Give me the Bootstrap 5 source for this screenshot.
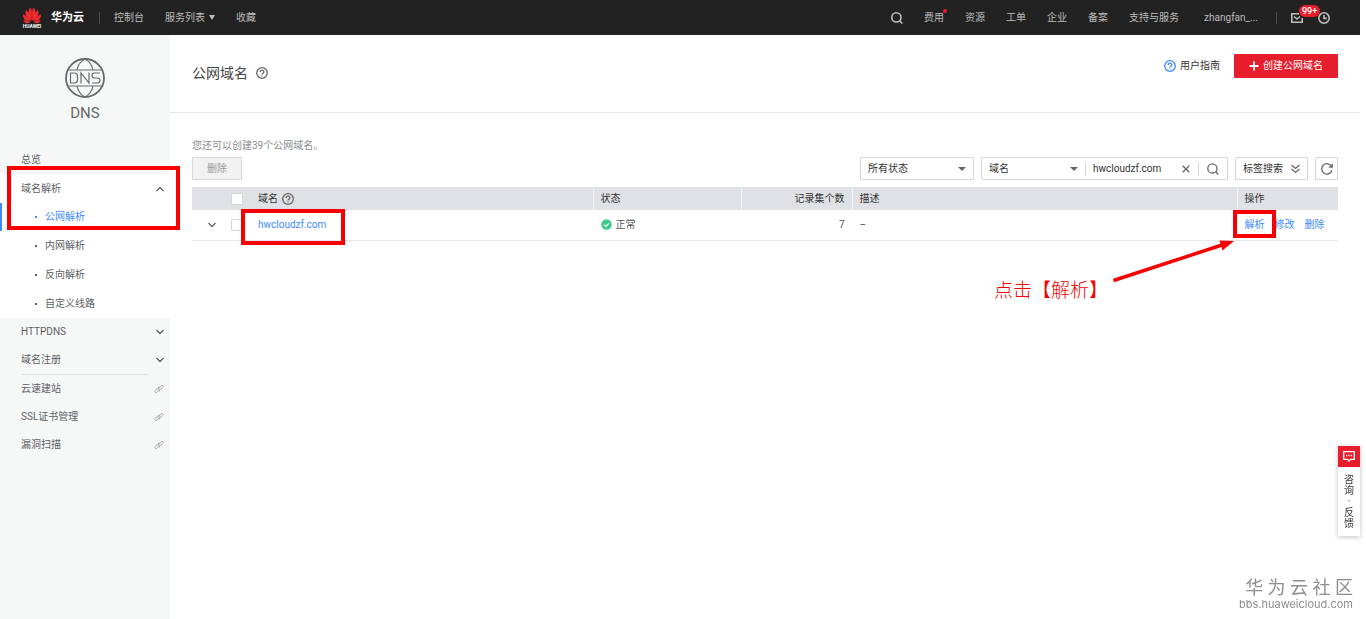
<!DOCTYPE html>
<html lang="zh-CN">
<head>
<meta charset="utf-8">
<meta name="viewport" content="width=device-width, initial-scale=1">
<title>公网域名</title>
<link href="https://cdn.jsdelivr.net/npm/bootstrap@5.3.0/dist/css/bootstrap.min.css" rel="stylesheet">
<style>
:root{--ink:#333;--soft:#5c6063;--blue:#3d8bff;--brand:#e71d2c;--mark-red:#f80000;--line:#d5d7d9}
body{font-family:Roboto,"Noto Sans CJK SC",sans-serif;font-size:10px;line-height:16px;color:var(--ink);background:#fff;padding-right:6px;min-height:100vh}
a{text-decoration:none;color:inherit}
svg{display:block;flex:none}
.ico{fill:none;stroke:currentColor;stroke-width:1.3}
.ico-bold{stroke-width:1.6}
.ico-gray{color:#666}
.ico-pale{color:#aaa;stroke-width:1}
/* top bar */
.topbar{height:35px;background:#222;color:#bdbdbd;padding:0 30px 0 22px}
.brand-name{font-size:11px;font-weight:700;color:#fff;margin:0 15px 0 9px}
.vline{width:1px;height:12px;background:#4a4a4a}
.left-links{gap:21px;margin-left:14px}
.right-links{gap:21px}
.right-links .vline{margin:0 -7px 0 -3px}
.right-links .history{margin-left:-6px}
.red-dot{position:absolute;right:-3px;top:-1px;width:4px;height:4px;border-radius:50%;background:var(--brand)}
.count{position:absolute;left:8px;top:-8px;height:12px;line-height:12px;padding:0 3px;border-radius:6px;background:var(--brand);color:#fff;font-size:9px;font-weight:500}
/* sidebar */
.sidebar{width:170px;background:#f6f8f8;min-height:calc(100vh - 35px);color:var(--soft)}
.service{height:111px;padding-top:22px;font-size:15px;line-height:20px;color:#63676a}
.side-item{height:28px;padding:0 6px 0 21px}
.side-open{background:#fff}
.side-open .side-item{height:29px}
.side-sub{gap:1px}
.side-sub a{height:28px;padding-left:35px;gap:8px}
.side-sub a::before{content:"";width:2px;height:2px;background:currentColor}
.side-sub a.current{color:var(--blue);box-shadow:inset 2px 0 var(--blue)}
.side-rule{height:1px;background:#e0e3e4;margin:0 22px 0 21px}
.marker{position:absolute;border:4px solid var(--mark-red);pointer-events:none}
.marker-side{left:7px;top:-8px;width:173px;height:64px}
/* main */
.page-head{height:78px;padding:19px 22px 0;border-bottom:1px solid #e3e5e6}
.page-head h1{font-size:14px;line-height:20px;font-weight:400;margin:9px 0 0;color:#444}
.guide{margin-right:14px}
.btn{--bs-btn-font-size:10px;--bs-btn-line-height:16px;--bs-btn-padding-y:0;--bs-btn-border-radius:1px;height:23px}
.btn-create{height:24px;--bs-btn-padding-x:14px;--bs-btn-bg:#e71d2c;--bs-btn-color:#fff;--bs-btn-hover-bg:#c9101f;--bs-btn-hover-color:#fff}
.content-area{padding:25px 22px 0}
.quota{color:#8a8d90;margin-bottom:3px}
.tools{gap:7px}
.btn-del{--bs-btn-padding-x:14px;--bs-btn-disabled-bg:#f2f2f2;--bs-btn-disabled-color:#999;--bs-btn-disabled-border-color:#d5d7d9;--bs-btn-disabled-opacity:1}
.btn-tool{--bs-btn-bg:#fff;--bs-btn-border-color:#d5d7d9;--bs-btn-padding-x:7px;--bs-btn-color:#333}
.btn-icon{width:23px;--bs-btn-padding-x:0}
.form-select,.form-control{font-size:10px;line-height:16px;height:23px;padding:0 7px;border:1px solid var(--line);border-radius:1px;color:var(--ink)}
.form-select{width:114px;flex:none;background-image:url("data:image/svg+xml,%3Csvg xmlns='http://www.w3.org/2000/svg' viewBox='0 0 8 4'%3E%3Cpath d='M0 0h8L4 4z' fill='%23666'/%3E%3C/svg%3E");background-size:8px 4px;background-position:right 7px center}
.search-box{border:1px solid var(--line);height:23px;border-radius:1px;width:247px}
.search-box .form-select,.search-box .form-control{border:0;height:21px;background-color:transparent}
.search-box .form-select{width:103px}
.search-box .form-control{min-width:0;width:0}
.split{width:1px;height:14px;background:#d5d7d9}
.plain{border:0;background:none;padding:0;color:#666}
.grid-table{table-layout:fixed;margin:7px 0 0;border-color:#e6e8e9;--bs-table-color:#333;--bs-table-bg:transparent}
.grid-table th{font-weight:400;vertical-align:middle;background:#dfe1e4;height:23px;padding:0 7px;border:0;border-left:1px solid #f3f4f5}
.grid-table td{height:30px;padding:0 7px;border-left:1px solid transparent;color:#50545a}
.grid-table .first{border-left:0}
.c-fold{width:31px}.c-pick{width:27px}.c-name{width:343px}
.c-state{width:148px}.c-count{width:111px}.c-ops{width:101px}
.grid-table .tight{padding-left:8px;border-left:0}
.form-check-input{width:12px;height:12px;margin:0;border:1px solid #d5d7d9;border-radius:1px!important;display:block}
.link-b{color:var(--blue)}
.ops{gap:10px}
.marker-name{left:-17px;top:-10px;width:104px;height:36px}
.marker-op{left:-12px;top:-7px;width:43px;height:28px}
.arrow{position:absolute;right:104px;top:52px}
.callout-text{position:absolute;right:230px;top:90px;font-size:19px;line-height:28px;font-weight:300;color:var(--mark-red)}
.feedback{position:fixed;right:6px;bottom:83px;width:22px;background:#fff;box-shadow:0 1px 5px rgba(0,0,0,.25)}
.feedback-top{height:21px;background:var(--brand);color:#fff}
.feedback-text{line-height:11px;padding:7px 6px;text-align:center}
.watermark{position:fixed;right:13px;bottom:8px;color:#8e8e8e;text-align:right;font-size:11px;line-height:12px}
.watermark strong{display:block;font-size:18px;line-height:20px;font-weight:400}
.watermark span{font-family:Inter,sans-serif}
</style>
</head>
<body>
<svg width="0" height="0" class="position-absolute" aria-hidden="true">
<defs>
<symbol id="i-help" viewBox="0 0 12 12"><circle cx="6" cy="6" r="5.3"/><path d="M4.2 4.9a1.8 1.7 0 1 1 2.6 1.5Q6 6.800 6 7.500M6 8.400v1"/></symbol>
<symbol id="i-search" viewBox="0 0 12 12"><circle cx="5.400" cy="5.400" r="4.600"/><path d="M8.600 8.800l2.700 2.700"/></symbol>
<symbol id="i-down" viewBox="0 0 8 6"><path d="M.5 1L4 4.500 7.500 1"/></symbol>
<symbol id="i-link" viewBox="0 0 10 10"><path d="M3.800 5.600L7 1.900q.9-1 1.800-.2.700.8 0 1.700L6 6.500q-.9.900-1.800.1M6.200 4.400L3 8.100q-.9 1-1.800.2-.7-.8 0-1.700L4 3.500q.9-.9 1.800-.1"/></symbol>
</defs>
</svg>

<header class="topbar d-flex align-items-center justify-content-between">
  <div class="d-flex align-items-center">
    <a href="#" class="d-flex align-items-center" aria-label="华为云">
      <svg width="20" height="22" viewBox="0 0 20 22">
        <g fill="#ee2a2e">
          <path d="M9.600 14C6 9 5.600 2 8.700.8 10.200 3 10 9 9.600 14zM10.400 14C14 9 14.400 2 11.300.8 9.800 3 10 9 10.400 14z"/>
          <path d="M8.800 14.300C3.500 10 2.800 6 4.100 3.300 6.800 4.500 8.800 9 8.800 14.300zM11.200 14.300C16.500 10 17.200 6 15.900 3.300 13.200 4.500 11.200 9 11.200 14.300z"/>
          <path d="M8.300 14.900C3 13.500.4 11 1 7.200 4 8.500 7 11.500 8.300 14.900zM11.700 14.900C17 13.500 19.600 11 19 7.200 16 8.500 13 11.500 11.700 14.900z"/>
          <path d="M8 15.500C5 17 2.500 16 1.200 13.300 4 13 6.500 14 8 15.500zM12 15.500C15 17 17.500 16 18.800 13.300 16 13 13.500 14 12 15.500z"/>
        </g>
        <text x="10" y="21" text-anchor="middle" font-size="5" font-weight="700" fill="#fff">HUAWEI</text>
      </svg>
      <span class="brand-name">华为云</span>
    </a>
    <span class="vline"></span>
    <nav class="left-links d-flex align-items-center">
      <a href="#">控制台</a>
      <a href="#" class="d-flex align-items-center gap-1">服务列表 <svg width="6" height="5" viewBox="0 0 6 5"><path d="M0 0h6L3 5z" fill="currentColor"/></svg></a>
      <a href="#">收藏</a>
    </nav>
  </div>
  <nav class="right-links d-flex align-items-center">
    <a href="#" aria-label="搜索"><svg class="ico ico-bold" width="12" height="12"><use href="#i-search"/></svg></a>
    <a href="#" class="position-relative">费用<span class="red-dot"></span></a>
    <a href="#">资源</a>
    <a href="#">工单</a>
    <a href="#">企业</a>
    <a href="#">备案</a>
    <a href="#">支持与服务</a>
    <a href="#" class="ms-1">zhangfan_...</a>
    <span class="vline"></span>
    <a href="#" class="position-relative" aria-label="消息"><svg class="ico ico-bold" width="12" height="10" viewBox="0 0 12 10"><path d="M8 .8H.8v8.400h10.400V5M3 3.500l3 2.500 3-2.500"/></svg><span class="count">99+</span></a>
    <a href="#" class="history" aria-label="历史"><svg class="ico ico-bold" width="12" height="12" viewBox="0 0 12 12"><circle cx="6" cy="6" r="5.200"/><path d="M6 3v3.400h2.800"/></svg></a>
  </nav>
</header>

<div class="d-flex">
  <aside class="sidebar flex-shrink-0">
    <div class="service d-flex flex-column align-items-center">
      <svg width="42" height="42" viewBox="0 0 42 42" fill="none" stroke="#666a6d" stroke-width="1.200">
        <circle cx="21" cy="21" r="19" stroke-width="1.800"/>
        <path d="M3.500 13h35M3.500 29h35M13 13c1-5 4-9 8-11 4 2 7 6 8 11M13 29c1 5 4 9 8 11 4-2 7-6 8-11"/>
        <path d="M6.500 16v10h4q3 0 3-3v-4q0-3-3-3zM17 26.500V16l8 10V15.500M36 16h-5.500q-2.500 0-2.500 2.500t2.500 2.500h3q2.500 0 2.500 2.500T33.500 26H28"/>
      </svg>
      <span class="mt-1">DNS</span>
    </div>
    <nav>
      <a href="#" class="side-item d-flex align-items-center">总览</a>
      <div class="side-open position-relative">
        <a href="#" class="side-item d-flex align-items-center justify-content-between">域名解析 <svg class="ico" width="8" height="6" viewBox="0 0 8 6"><path d="M.5 5L4 1.500 7.500 5"/></svg></a>
        <div class="side-sub d-flex flex-column">
          <a href="#" class="current d-flex align-items-center">公网解析</a>
          <a href="#" class="d-flex align-items-center">内网解析</a>
          <a href="#" class="d-flex align-items-center">反向解析</a>
          <a href="#" class="d-flex align-items-center">自定义线路</a>
        </div>
        <span class="marker marker-side"></span>
      </div>
      <a href="#" class="side-item d-flex align-items-center justify-content-between">HTTPDNS <svg class="ico" width="8" height="6"><use href="#i-down"/></svg></a>
      <a href="#" class="side-item d-flex align-items-center justify-content-between">域名注册 <svg class="ico" width="8" height="6"><use href="#i-down"/></svg></a>
      <div class="side-rule"></div>
      <a href="#" class="side-item d-flex align-items-center justify-content-between">云速建站 <svg class="ico ico-pale" width="10" height="10"><use href="#i-link"/></svg></a>
      <a href="#" class="side-item d-flex align-items-center justify-content-between">SSL证书管理 <svg class="ico ico-pale" width="10" height="10"><use href="#i-link"/></svg></a>
      <a href="#" class="side-item d-flex align-items-center justify-content-between">漏洞扫描 <svg class="ico ico-pale" width="10" height="10"><use href="#i-link"/></svg></a>
    </nav>
  </aside>

  <main class="flex-grow-1">
    <div class="page-head d-flex align-items-start justify-content-between">
      <h1 class="d-flex align-items-center gap-2">公网域名 <svg class="ico ico-gray" width="12" height="12"><use href="#i-help"/></svg></h1>
      <div class="d-flex align-items-center">
        <a href="#" class="guide d-flex align-items-center gap-1"><svg class="ico link-b" width="12" height="12"><use href="#i-help"/></svg>用户指南</a>
        <button type="button" class="btn btn-create d-flex align-items-center gap-1"><svg width="10" height="10" viewBox="0 0 10 10" stroke="#fff" stroke-width="1.800"><path d="M5 .5v9M.5 5h9"/></svg>创建公网域名</button>
      </div>
    </div>

    <div class="content-area">
      <div class="quota">您还可以创建39个公网域名。</div>
      <div class="d-flex justify-content-between">
        <button type="button" class="btn btn-del" disabled>删除</button>
        <div class="tools d-flex">
          <select class="form-select" aria-label="状态"><option>所有状态</option></select>
          <div class="search-box d-flex align-items-center">
            <select class="form-select" aria-label="搜索字段"><option>域名</option></select>
            <span class="split"></span>
            <input class="form-control flex-fill" type="text" value="hwcloudzf.com" aria-label="搜索内容">
            <button type="button" class="plain me-2" aria-label="清除"><svg class="ico" width="8" height="8" viewBox="0 0 8 8"><path d="M.7.7l6.600 6.600M7.300.7L.7 7.300"/></svg></button>
            <span class="split"></span>
            <button type="button" class="plain mx-2" aria-label="搜索"><svg class="ico" width="12" height="12"><use href="#i-search"/></svg></button>
          </div>
          <button type="button" class="btn btn-tool d-flex align-items-center gap-2">标签搜索 <svg class="ico ico-gray" width="9" height="10" viewBox="0 0 9 10"><path d="M.5 1l4 3.500 4-3.500M.5 5l4 3.500 4-3.500"/></svg></button>
          <button type="button" class="btn btn-tool btn-icon d-flex align-items-center justify-content-center" aria-label="刷新"><svg class="ico ico-gray" width="12" height="12" viewBox="0 0 12 12"><path d="M11 7.200A5.200 5.200 0 1 1 10.500 3.400M11.200.8v3.400H7.800"/></svg></button>
        </div>
      </div>

      <div class="position-relative">
        <table class="table align-middle grid-table">
          <thead>
            <tr>
              <th class="first c-fold"></th>
              <th class="tight c-pick"><input class="form-check-input" type="checkbox" aria-label="全选"></th>
              <th class="tight c-name"><span class="d-flex align-items-center gap-1">域名 <svg class="ico ico-gray" width="12" height="12"><use href="#i-help"/></svg></span></th>
              <th class="c-state">状态</th>
              <th class="c-count text-end">记录集个数</th>
              <th>描述</th>
              <th class="c-ops">操作</th>
            </tr>
          </thead>
          <tbody>
            <tr>
              <td class="first"><button type="button" class="plain d-flex ms-auto" aria-label="展开"><svg class="ico" width="8" height="6"><use href="#i-down"/></svg></button></td>
              <td class="tight"><input class="form-check-input" type="checkbox" aria-label="选择 hwcloudzf.com"></td>
              <td class="tight"><span class="position-relative"><a href="#" class="link-b">hwcloudzf.com</a><span class="marker marker-name"></span></span></td>
              <td><span class="d-flex align-items-center gap-1"><svg width="11" height="11" viewBox="0 0 11 11"><circle cx="5.500" cy="5.500" r="5.200" fill="#3dc98b"/><path d="M3 5.600l2 1.900 3.200-3.400" fill="none" stroke="#fff" stroke-width="1.100"/></svg>正常</span></td>
              <td class="text-end">7</td>
              <td>–</td>
              <td><span class="ops d-flex position-relative link-b"><a href="#">解析</a><a href="#">修改</a><a href="#">删除</a><span class="marker marker-op"></span></span></td>
            </tr>
          </tbody>
        </table>
        <svg class="arrow" width="122" height="44" viewBox="0 0 122 44"><path d="M1.500 41.500L110 6" stroke="#f80000" stroke-width="3.500"/><path d="M122 2L107.500 1.500 110.500 11.500z" fill="#f80000"/></svg>
        <div class="callout-text">点击【解析】</div>
      </div>
    </div>
  </main>
</div>

<a href="#" class="feedback">
  <div class="feedback-top d-flex align-items-center justify-content-center"><svg class="ico" width="12" height="11" viewBox="0 0 12 11"><path d="M.7.7h10.600v7.600H7.500L6 10 4.500 8.300H.7zM3 4.500h1.200M5.400 4.500h1.200M7.800 4.500H9"/></svg></div>
  <div class="feedback-text">咨<br>询<br>·<br>反<br>馈</div>
</a>
<div class="watermark"><strong>华 为 云 社 区</strong><span>bbs.huaweicloud.com</span></div>
<script src="https://cdn.jsdelivr.net/npm/bootstrap@5.3.0/dist/js/bootstrap.bundle.min.js"></script>
</body>
</html>
